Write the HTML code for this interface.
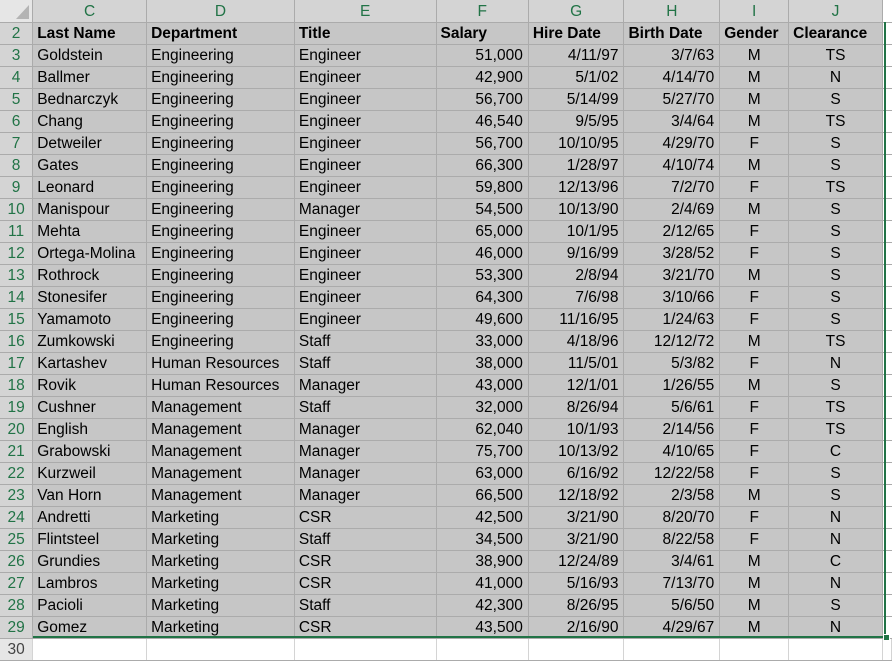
<!DOCTYPE html>
<html><head><meta charset="utf-8"><style>
body{margin:0;width:892px;height:648px;overflow:hidden;background:#fff;font-family:"Liberation Sans",Arial,sans-serif;position:relative}
table{border-collapse:collapse;table-layout:fixed;position:absolute;left:0;top:0}
td{height:21px;padding:0 4px;border-right:1px solid #ababab;border-bottom:1px solid #ababab;font-size:15.5px;color:#000;white-space:nowrap;overflow:hidden;background:#c6c6c6;line-height:21px}
tr.h td{background:#d4d4d4;color:#217346;text-align:center;font-size:15.5px;height:22px}
td.n{background:#d4d4d4;color:#217346;text-align:center;padding:0}
td.r{text-align:right;padding-right:5px}
td.c{text-align:center}
tr.b td{font-weight:bold}
tr.b td.n{font-weight:normal}
tr.w td{background:#fff;border-right:1px solid #d4d4d4}
tr.w td.n{background:#e6e6e6;color:#444}
td.x{background:#fff !important;border-right:none}
#gb{position:absolute;left:33px;top:636px;width:853px;height:2px;background:#217346}
#gr{position:absolute;left:884px;top:22px;width:2px;height:616px;background:#217346}
#gh{position:absolute;left:883px;top:634px;width:5px;height:5px;background:#217346;border:1px solid #fff}
#corner{position:absolute;left:0;top:0;width:32px;height:22px}
</style></head><body>
<table>
<colgroup><col style="width:33px"><col style="width:114px"><col style="width:148px"><col style="width:143px"><col style="width:93px"><col style="width:96px"><col style="width:96px"><col style="width:69px"><col style="width:94px"><col style="width:6px"></colgroup>
<tr class="h"><td class="n" style="background:#e6e6e6"></td><td>C</td><td>D</td><td>E</td><td>F</td><td>G</td><td>H</td><td>I</td><td>J</td><td class="x"></td></tr>
<tr class="b"><td class="n">2</td><td>Last Name</td><td>Department</td><td>Title</td><td>Salary</td><td>Hire Date</td><td>Birth Date</td><td>Gender</td><td>Clearance</td><td class="x"></td></tr>
<tr><td class="n">3</td><td>Goldstein</td><td>Engineering</td><td>Engineer</td><td class="r">51,000</td><td class="r">4/11/97</td><td class="r">3/7/63</td><td class="c">M</td><td class="c">TS</td><td class="x"></td></tr>
<tr><td class="n">4</td><td>Ballmer</td><td>Engineering</td><td>Engineer</td><td class="r">42,900</td><td class="r">5/1/02</td><td class="r">4/14/70</td><td class="c">M</td><td class="c">N</td><td class="x"></td></tr>
<tr><td class="n">5</td><td>Bednarczyk</td><td>Engineering</td><td>Engineer</td><td class="r">56,700</td><td class="r">5/14/99</td><td class="r">5/27/70</td><td class="c">M</td><td class="c">S</td><td class="x"></td></tr>
<tr><td class="n">6</td><td>Chang</td><td>Engineering</td><td>Engineer</td><td class="r">46,540</td><td class="r">9/5/95</td><td class="r">3/4/64</td><td class="c">M</td><td class="c">TS</td><td class="x"></td></tr>
<tr><td class="n">7</td><td>Detweiler</td><td>Engineering</td><td>Engineer</td><td class="r">56,700</td><td class="r">10/10/95</td><td class="r">4/29/70</td><td class="c">F</td><td class="c">S</td><td class="x"></td></tr>
<tr><td class="n">8</td><td>Gates</td><td>Engineering</td><td>Engineer</td><td class="r">66,300</td><td class="r">1/28/97</td><td class="r">4/10/74</td><td class="c">M</td><td class="c">S</td><td class="x"></td></tr>
<tr><td class="n">9</td><td>Leonard</td><td>Engineering</td><td>Engineer</td><td class="r">59,800</td><td class="r">12/13/96</td><td class="r">7/2/70</td><td class="c">F</td><td class="c">TS</td><td class="x"></td></tr>
<tr><td class="n">10</td><td>Manispour</td><td>Engineering</td><td>Manager</td><td class="r">54,500</td><td class="r">10/13/90</td><td class="r">2/4/69</td><td class="c">M</td><td class="c">S</td><td class="x"></td></tr>
<tr><td class="n">11</td><td>Mehta</td><td>Engineering</td><td>Engineer</td><td class="r">65,000</td><td class="r">10/1/95</td><td class="r">2/12/65</td><td class="c">F</td><td class="c">S</td><td class="x"></td></tr>
<tr><td class="n">12</td><td>Ortega-Molina</td><td>Engineering</td><td>Engineer</td><td class="r">46,000</td><td class="r">9/16/99</td><td class="r">3/28/52</td><td class="c">F</td><td class="c">S</td><td class="x"></td></tr>
<tr><td class="n">13</td><td>Rothrock</td><td>Engineering</td><td>Engineer</td><td class="r">53,300</td><td class="r">2/8/94</td><td class="r">3/21/70</td><td class="c">M</td><td class="c">S</td><td class="x"></td></tr>
<tr><td class="n">14</td><td>Stonesifer</td><td>Engineering</td><td>Engineer</td><td class="r">64,300</td><td class="r">7/6/98</td><td class="r">3/10/66</td><td class="c">F</td><td class="c">S</td><td class="x"></td></tr>
<tr><td class="n">15</td><td>Yamamoto</td><td>Engineering</td><td>Engineer</td><td class="r">49,600</td><td class="r">11/16/95</td><td class="r">1/24/63</td><td class="c">F</td><td class="c">S</td><td class="x"></td></tr>
<tr><td class="n">16</td><td>Zumkowski</td><td>Engineering</td><td>Staff</td><td class="r">33,000</td><td class="r">4/18/96</td><td class="r">12/12/72</td><td class="c">M</td><td class="c">TS</td><td class="x"></td></tr>
<tr><td class="n">17</td><td>Kartashev</td><td>Human Resources</td><td>Staff</td><td class="r">38,000</td><td class="r">11/5/01</td><td class="r">5/3/82</td><td class="c">F</td><td class="c">N</td><td class="x"></td></tr>
<tr><td class="n">18</td><td>Rovik</td><td>Human Resources</td><td>Manager</td><td class="r">43,000</td><td class="r">12/1/01</td><td class="r">1/26/55</td><td class="c">M</td><td class="c">S</td><td class="x"></td></tr>
<tr><td class="n">19</td><td>Cushner</td><td>Management</td><td>Staff</td><td class="r">32,000</td><td class="r">8/26/94</td><td class="r">5/6/61</td><td class="c">F</td><td class="c">TS</td><td class="x"></td></tr>
<tr><td class="n">20</td><td>English</td><td>Management</td><td>Manager</td><td class="r">62,040</td><td class="r">10/1/93</td><td class="r">2/14/56</td><td class="c">F</td><td class="c">TS</td><td class="x"></td></tr>
<tr><td class="n">21</td><td>Grabowski</td><td>Management</td><td>Manager</td><td class="r">75,700</td><td class="r">10/13/92</td><td class="r">4/10/65</td><td class="c">F</td><td class="c">C</td><td class="x"></td></tr>
<tr><td class="n">22</td><td>Kurzweil</td><td>Management</td><td>Manager</td><td class="r">63,000</td><td class="r">6/16/92</td><td class="r">12/22/58</td><td class="c">F</td><td class="c">S</td><td class="x"></td></tr>
<tr><td class="n">23</td><td>Van Horn</td><td>Management</td><td>Manager</td><td class="r">66,500</td><td class="r">12/18/92</td><td class="r">2/3/58</td><td class="c">M</td><td class="c">S</td><td class="x"></td></tr>
<tr><td class="n">24</td><td>Andretti</td><td>Marketing</td><td>CSR</td><td class="r">42,500</td><td class="r">3/21/90</td><td class="r">8/20/70</td><td class="c">F</td><td class="c">N</td><td class="x"></td></tr>
<tr><td class="n">25</td><td>Flintsteel</td><td>Marketing</td><td>Staff</td><td class="r">34,500</td><td class="r">3/21/90</td><td class="r">8/22/58</td><td class="c">F</td><td class="c">N</td><td class="x"></td></tr>
<tr><td class="n">26</td><td>Grundies</td><td>Marketing</td><td>CSR</td><td class="r">38,900</td><td class="r">12/24/89</td><td class="r">3/4/61</td><td class="c">M</td><td class="c">C</td><td class="x"></td></tr>
<tr><td class="n">27</td><td>Lambros</td><td>Marketing</td><td>CSR</td><td class="r">41,000</td><td class="r">5/16/93</td><td class="r">7/13/70</td><td class="c">M</td><td class="c">N</td><td class="x"></td></tr>
<tr><td class="n">28</td><td>Pacioli</td><td>Marketing</td><td>Staff</td><td class="r">42,300</td><td class="r">8/26/95</td><td class="r">5/6/50</td><td class="c">M</td><td class="c">S</td><td class="x"></td></tr>
<tr><td class="n">29</td><td>Gomez</td><td>Marketing</td><td>CSR</td><td class="r">43,500</td><td class="r">2/16/90</td><td class="r">4/29/67</td><td class="c">M</td><td class="c">N</td><td class="x"></td></tr>
<tr class="w"><td class="n">30</td><td></td><td></td><td></td><td></td><td></td><td></td><td></td><td></td><td class="x"></td></tr>
</table>
<svg id="corner" viewBox="0 0 32 22"><polygon points="29,5 29,19 16,19" fill="#b4b4b4"/></svg>
<div id="gb"></div><div id="gr"></div><div id="gh"></div>
</body></html>
